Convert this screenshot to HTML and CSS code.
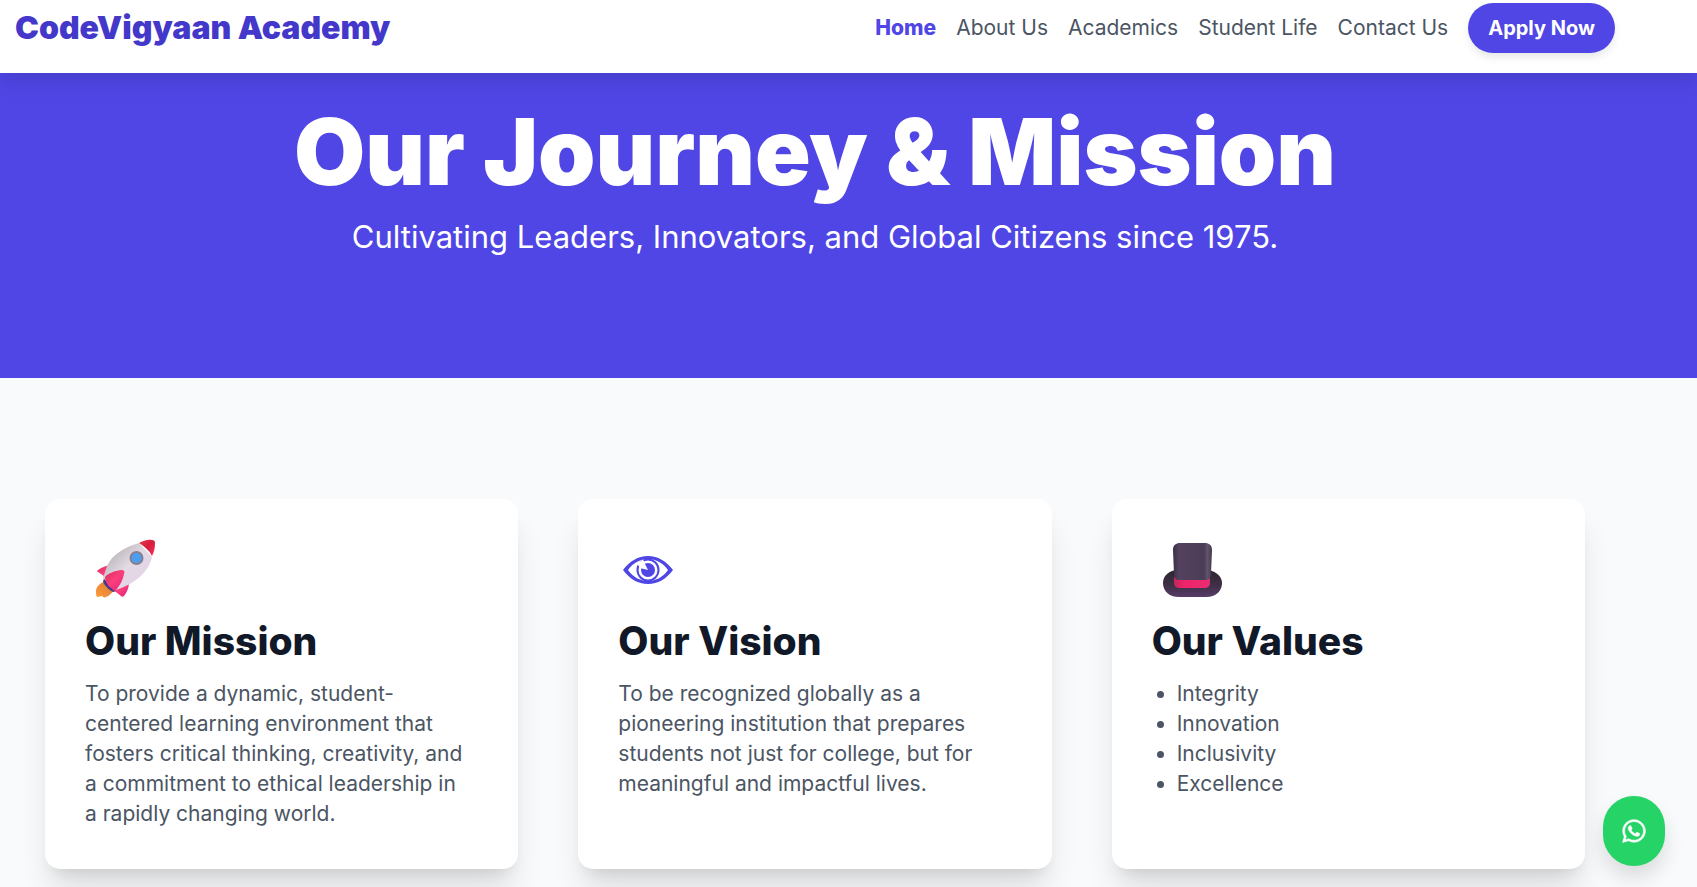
FILE: index.html
```html
<!DOCTYPE html>
<html lang="en">
<head>
  <meta charset="UTF-8">
  <meta name="viewport" content="width=device-width, initial-scale=1.0">
  <title>CodeVigyaan Academy</title>
  <link rel="stylesheet" href="styles.css">
</head>
<body>

  <header class="site-header">
    <a href="#" class="logo">CodeVigyaan Academy</a>
    <nav class="main-nav">
      <a href="#" class="active">Home</a>
      <a href="#about">About Us</a>
      <a href="#academics">Academics</a>
      <a href="#life">Student Life</a>
      <a href="#contact">Contact Us</a>
      <a href="#apply" class="apply-btn">Apply Now</a>
    </nav>
  </header>

  <section class="hero">
    <h1>Our Journey &amp; Mission</h1>
    <p>Cultivating Leaders, Innovators, and Global Citizens since 1975.</p>
  </section>

  <main class="cards">
    <article class="card">
      <svg class="card-icon" viewBox="0 -1 80 60" aria-hidden="true">
        <defs>
          <linearGradient id="hull" x1="0" y1="0" x2="1" y2="1">
            <stop offset="0.2" stop-color="#bdb8bd"/>
            <stop offset="0.5" stop-color="#e3dae3"/>
            <stop offset="1" stop-color="#e2cdea"/>
          </linearGradient>
          <linearGradient id="fin" x1="0" y1="0" x2="1" y2="1">
            <stop offset="0" stop-color="#d8305c"/>
            <stop offset="0.5" stop-color="#fb3f7c"/>
            <stop offset="1" stop-color="#e0207c"/>
          </linearGradient>
          <linearGradient id="nose" x1="0" y1="0" x2="1" y2="1">
            <stop offset="0" stop-color="#e8384c"/>
            <stop offset="0.5" stop-color="#d81c3c"/>
            <stop offset="1" stop-color="#fc3060"/>
          </linearGradient>
          <linearGradient id="flame" x1="1" y1="0" x2="0" y2="1">
            <stop offset="0" stop-color="#d87838"/>
            <stop offset="1" stop-color="#ff9c38"/>
          </linearGradient>
        </defs>
        <path fill="url(#flame)" d="M19 42c-4 1-8 5-8 9 0 2 0 5 1 6 2 0 3-1 5-1 1 1 2 2 4 1 3-1 6-4 8-7z"/>
        <path fill="#453a8c" d="M19 38l13 13-4 1c-4-2-8-6-10-10z"/>
        <path fill="url(#fin)" d="M28 25c-6 0-11 2-15 5-1 1-1 2 0 2l9 6 8-11z"/>
        <path fill="url(#fin)" d="M44 42c0 6-2 10-5 14-1 1-2 1-3 0l-9-7 10-7z"/>
        <path fill="url(#hull)" d="M54 3c-15 4-27 12-32 23l-4 12 13 12c18-6 33-18 36-33z"/>
        <path fill="url(#nose)" d="M54 3c4-2 9-4 13-3 2 0 3 1 3 3 0 5-1 9-3 13-3-6-8-10-13-13z"/>
        <path fill="url(#fin)" d="M20 37c4-4 9-6 16-7 3 0 4 1 3 4-1 6-4 11-8 16-4 0-11-6-11-13z"/>
        <circle cx="51.500" cy="18" r="7" fill="#858090"/>
        <circle cx="51.500" cy="18" r="5" fill="#4d9df0"/>
      </svg>
      <h2>Our Mission</h2>
      <p>To provide a dynamic, student-centered learning environment that fosters critical thinking, creativity, and a&nbsp;commitment to ethical leadership in a&nbsp;rapidly changing world.</p>
    </article>

    <article class="card">
      <svg class="card-icon" viewBox="0 -2 80 60" aria-hidden="true">
        <path fill="#4f46e5" fill-rule="evenodd" d="M5 29C12 20 20 15 30 15s18 5 25 14C48 38 40 43 30 43S12 38 5 29zM10 29C15 36 22 40 30 40S45 36 50 29C45 22 38 18 30 18S15 22 10 29z"/>
        <circle cx="30" cy="29" r="10.500" fill="none" stroke="#4f46e5" stroke-width="2"/>
        <circle cx="30" cy="29" r="7" fill="#4f46e5"/>
        <path fill="#fff" d="M30 29l-8-2-3-5 6-3z"/>
        <path fill="#fff" d="M20 23l5-4 2 3-5 5z"/>
      </svg>
      <h2>Our Vision</h2>
      <p>To be recognized globally as a pioneering institution that prepares students not just for college, but for meaningful and impactful lives.</p>
    </article>

    <article class="card">
      <svg class="card-icon" viewBox="1 -2 80 60" aria-hidden="true">
        <defs>
          <linearGradient id="crown" x1="0" x2="1">
            <stop offset="0" stop-color="#3a3044"/>
            <stop offset="0.15" stop-color="#54425f"/>
            <stop offset="0.8" stop-color="#4b3d57"/>
            <stop offset="0.88" stop-color="#62556c"/>
            <stop offset="1" stop-color="#43374d"/>
          </linearGradient>
          <linearGradient id="brim" x1="0" y1="0" x2="0" y2="1">
            <stop offset="0" stop-color="#2c2630"/>
            <stop offset="0.6" stop-color="#403048"/>
            <stop offset="1" stop-color="#583c68"/>
          </linearGradient>
          <linearGradient id="band" x1="0" x2="1">
            <stop offset="0" stop-color="#c02858"/>
            <stop offset="0.3" stop-color="#f0246c"/>
            <stop offset="1" stop-color="#e82c70"/>
          </linearGradient>
        </defs>
        <path fill="url(#brim)" d="M24 29h34c8 2 13 7 13 13 0 8-6 14-16 14H28c-10 0-16-6-16-14 0-6 4-11 12-13z"/>
        <path fill="url(#band)" d="M23 36h36v6c0 3-2 5-6 5H29c-4 0-6-2-6-5z"/>
        <path fill="url(#crown)" d="M22 9c0-5 3-7 7-7h25c4 0 7 2 7 7l-1 24c0 4-2 6-6 6H28c-3 0-5-2-5-6z"/>
      </svg>
      <h2>Our Values</h2>
      <ul>
        <li>Integrity</li>
        <li>Innovation</li>
        <li>Inclusivity</li>
        <li>Excellence</li>
      </ul>
    </article>
  </main>

  <a href="#whatsapp" class="whatsapp" aria-label="Chat on WhatsApp">
    <svg viewBox="0 0 448 512" aria-hidden="true">
      <path fill="#fff" stroke="#fff" stroke-width="12" d="M380.900 97.100C339 55.100 283.200 32 223.900 32c-122.400 0-222 99.600-222 222 0 39.100 10.200 77.300 29.600 111L0 480l117.700-30.900c32.400 17.700 68.900 27 106.100 27h.1c122.300 0 224.100-99.600 224.100-222 0-59.300-25.200-115-67.100-157zm-157 341.600c-33.200 0-65.700-8.900-94-25.700l-6.700-4-69.800 18.300L72 359.200l-4.400-7c-18.500-29.400-28.200-63.300-28.200-98.200 0-101.700 82.800-184.500 184.600-184.500 49.300 0 95.600 19.200 130.400 54.100 34.800 34.900 56.200 81.200 56.100 130.500 0 101.800-84.900 184.600-186.600 184.600zm101.200-138.200c-5.500-2.800-32.800-16.200-37.900-18-5.100-1.900-8.800-2.800-12.500 2.800-3.700 5.600-14.300 18-17.600 21.800-3.200 3.700-6.500 4.200-12 1.400-32.600-16.300-54-29.100-75.500-66-5.700-9.800 5.700-9.100 16.300-30.300 1.800-3.700.9-6.900-.5-9.700-1.400-2.800-12.500-30.100-17.100-41.200-4.500-10.800-9.100-9.300-12.500-9.500-3.200-.2-6.900-.2-10.600-.2-3.700 0-9.700 1.400-14.800 6.900-5.100 5.600-19.400 19-19.400 46.300 0 27.300 19.900 53.700 22.600 57.400 2.800 3.700 39.100 59.700 94.800 83.800 35.200 15.200 49 16.500 66.600 13.900 10.700-1.600 32.800-13.400 37.400-26.400 4.600-13 4.600-24.100 3.200-26.400-1.300-2.500-5-3.900-10.500-6.600z"/>
    </svg>
  </a>

</body>
</html>
```
FILE: styles.css
```css
* { box-sizing: border-box; }
body { margin: 0; font-family: Inter, "Open Sans", sans-serif; font-size: 21px; line-height: 30px;
       background: #f9fafb; color: #4b5563; }
h1, h2, p, ul { margin: 0; }
a { color: inherit; text-decoration: none; }

/* header */
.site-header { position: relative; z-index: 2; display: flex; justify-content: space-between; align-items: center;
               padding: 3px 82px 20px 15px; background: white;
               box-shadow: 0 6px 20px rgba(0,0,0,0.12); }
.logo { font-size: 32px; font-weight: 900; color: #4338ca; }
.main-nav { display: flex; align-items: center; gap: 20px; white-space: nowrap; }
.main-nav .active { font-weight: 800; color: #4f46e5; }
.main-nav .apply-btn { padding: 10px 20px; border-radius: 25px; background: #4f46e5; color: white;
                       font-size: 20px; font-weight: 700; box-shadow: 0 5px 8px -1px rgba(0,0,0,0.1); }

/* hero */
.hero { padding: 34px 67px 122px 0; background: #4f46e5; color: white; text-align: center; }
.hero h1 { font-size: 92px; line-height: 90px; font-weight: 900; }
.hero p { margin-top: 21px; font-size: 31px; line-height: 38px; }

/* cards */
.cards { display: grid; grid-template-columns: repeat(3, 1fr); gap: 60px; padding: 121px 112px 60px 45px; }
.card { padding: 40px; background: white; border-radius: 15px;
        box-shadow: 0 25px 32px -6px rgba(0,0,0,0.12), 0 10px 14px -8px rgba(0,0,0,0.1); }
.card-icon { display: block; width: 80px; height: 60px; overflow: visible; }
.card h2 { margin: 19px 0 16px; font-size: 39px; line-height: 45px; font-weight: 800; color: #111827; }
.card ul { padding-left: 25px; }

/* floating chat button */
.whatsapp { position: fixed; right: 32px; bottom: 21px; z-index: 3; padding: 22px 18px; border-radius: 31px;
            background: #25d366; box-shadow: 0 12px 20px rgba(0,0,0,0.12); }
.whatsapp svg { display: block; width: 26px; height: 26px; }
```
